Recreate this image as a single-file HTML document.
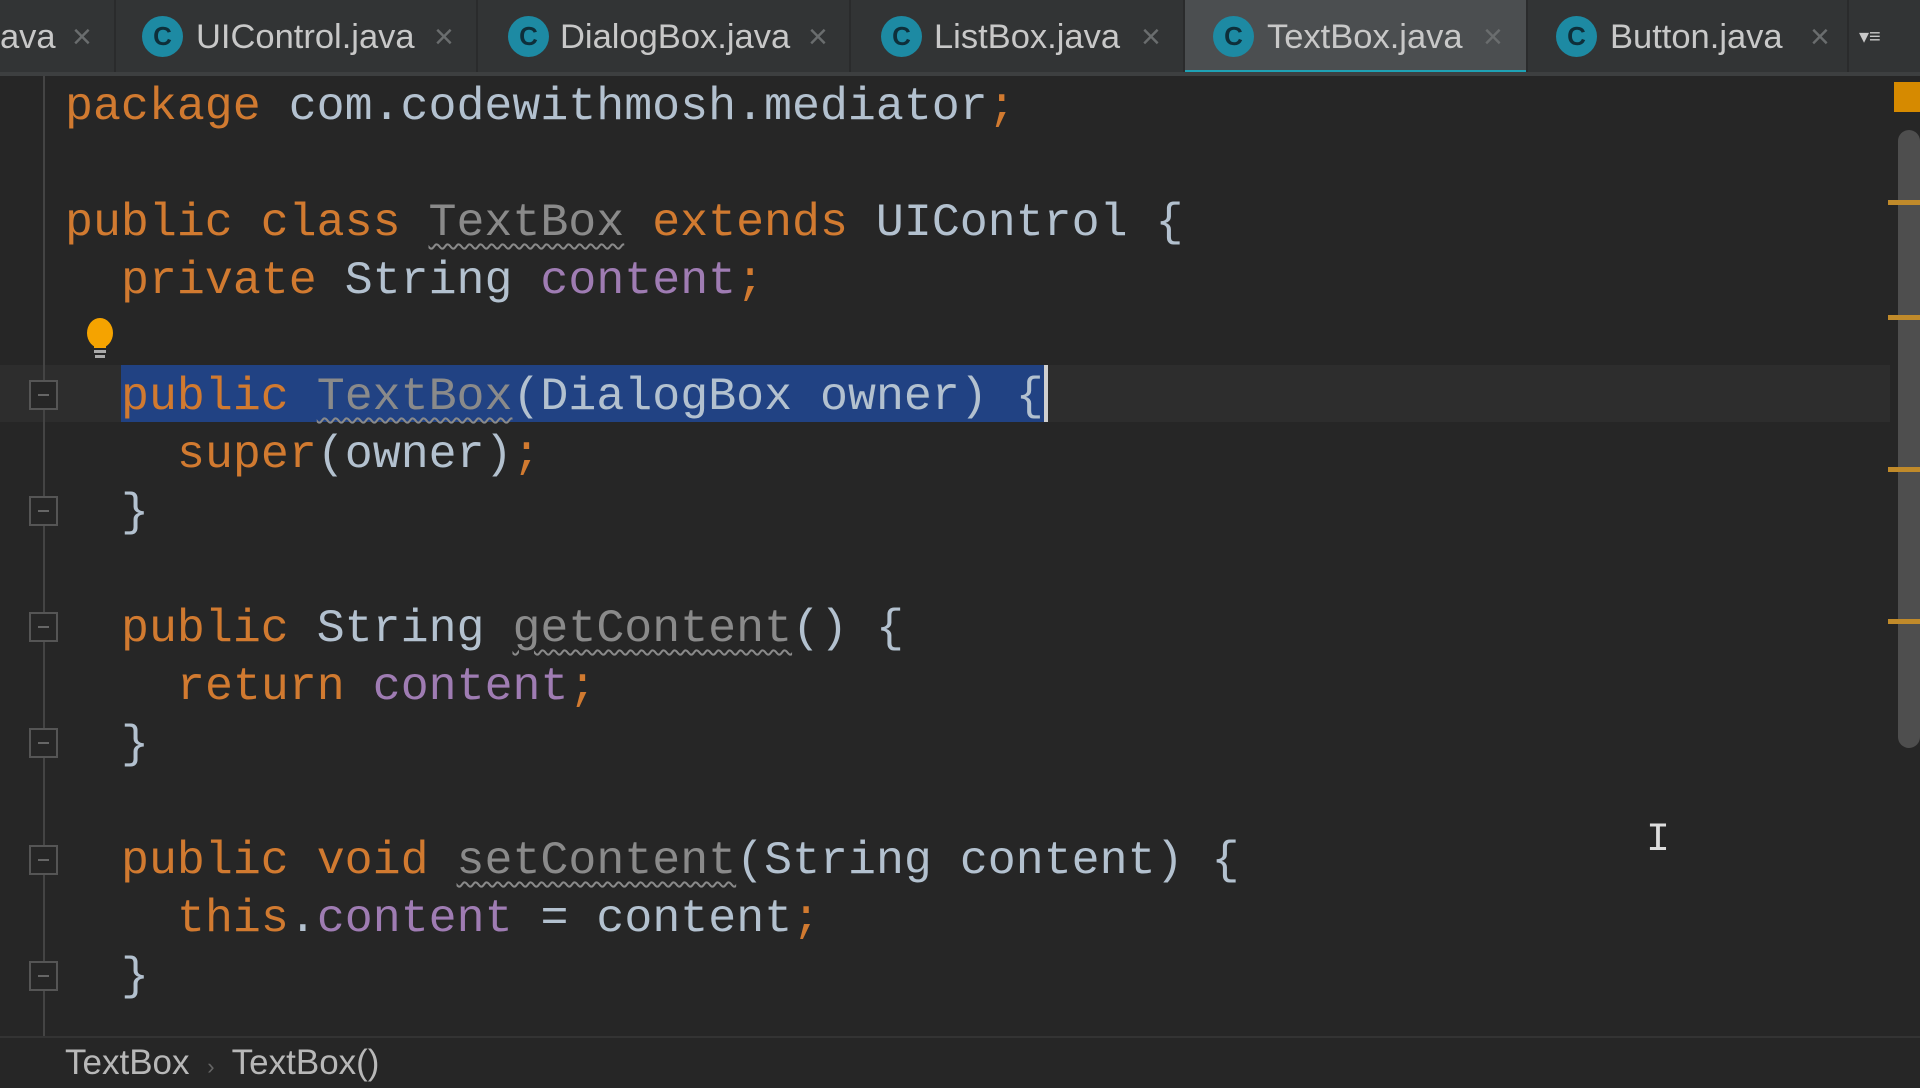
<!DOCTYPE html>
<html><head><meta charset="utf-8"><style>
*{margin:0;padding:0;box-sizing:border-box}
body{width:1920px;height:1080px;background:#262626;position:relative;overflow:hidden;font-family:"Liberation Sans",sans-serif}
.tabs{position:absolute;left:0;top:0;width:1920px;height:72px;background:#323435}
.tabbar-b{position:absolute;left:0;top:72px;width:1920px;height:4px;background:#3d3f40}
.tab{position:absolute;top:0;height:72px;color:#c8c8c8;font-size:34.5px;line-height:74px;border-right:2px solid #2a2b2c}
.tab.act{background:#4b4e50}
.tab.act:after{content:"";position:absolute;left:0;right:0;bottom:-4px;height:6px;background:#1ea2b5}
.ic{position:absolute;top:16px;width:41px;height:41px;border-radius:50%;background:#1d8aa3;color:#0e2f3a;font-size:26px;line-height:41px;text-align:center;font-weight:bold}
.x{position:absolute;top:0;color:#6a6d6e;font-size:34px}
.t{position:absolute;top:0}
.code{position:absolute;left:0;top:3px;font-family:"Liberation Mono",monospace;font-size:46.6px;color:#b3c1cf;white-space:pre}
.l{position:absolute;height:58px;line-height:58px}
.k{color:#d17a30}.p{color:#9f7cb3}.g{color:#8a8a8a;text-decoration:underline wavy #8a8a8a;text-decoration-thickness:2px;text-underline-offset:8px}
.fold{position:absolute;left:29px;width:29px;height:30px;border:2px solid #555;background:#262626}
.fold:after{content:"";position:absolute;left:7px;top:12px;width:11px;height:2px;background:#666}
</style></head><body>
<div class="tabs">
 <div class="tab" style="left:0;width:116px"><span class="t" style="left:0">ava</span><span class="x" style="left:72px">×</span></div>
 <div class="tab" style="left:116px;width:362px"><div class="ic" style="left:26px">C</div><span class="t" style="left:80px">UIControl.java</span><span class="x" style="left:318px">×</span></div>
 <div class="tab" style="left:478px;width:373px"><div class="ic" style="left:30px">C</div><span class="t" style="left:82px">DialogBox.java</span><span class="x" style="left:330px">×</span></div>
 <div class="tab" style="left:851px;width:334px"><div class="ic" style="left:30px">C</div><span class="t" style="left:83px">ListBox.java</span><span class="x" style="left:290px">×</span></div>
 <div class="tab act" style="left:1185px;width:343px"><div class="ic" style="left:28px">C</div><span class="t" style="left:82px">TextBox.java</span><span class="x" style="left:298px">×</span></div>
 <div class="tab" style="left:1528px;width:321px"><div class="ic" style="left:28px">C</div><span class="t" style="left:82px">Button.java</span><span class="x" style="left:282px">×</span></div>
 <div class="tab" style="left:1849px;width:71px;border:0"><span class="t" style="left:10px;font-size:20px">▾≡</span></div>
</div>
<div class="tabbar-b"></div>
<div style="position:absolute;left:0;top:365px;width:1890px;height:57px;background:#2d2d2d"></div>
<div style="position:absolute;left:121px;top:365px;width:927px;height:57px;background:#214283"></div>
<div style="position:absolute;left:1044px;top:365px;width:4px;height:57px;background:#d0d0d0"></div>
<div style="position:absolute;left:43px;top:76px;width:2px;height:960px;background:#444"></div>
<div class="fold" style="top:380px"></div><div class="fold" style="top:496px"></div>
<div class="fold" style="top:612px"></div><div class="fold" style="top:728px"></div>
<div class="fold" style="top:845px"></div><div class="fold" style="top:961px"></div>
<svg style="position:absolute;left:84px;top:318px" width="32" height="44"><ellipse cx="16" cy="15" rx="13" ry="15" fill="#f5a300"/><rect x="10" y="24" width="12" height="6" fill="#f5a300"/><rect x="10" y="32" width="12" height="3" fill="#aaa"/><rect x="11" y="37" width="10" height="3" fill="#aaa"/></svg>
<div class="code">
<div class="l" style="left:65px;top:75px"><span class="k">package</span> com.codewithmosh.mediator<span class="k">;</span></div>
<div class="l" style="left:65px;top:191px"><span class="k">public class</span> <span class="g">TextBox</span> <span class="k">extends</span> UIControl {</div>
<div class="l" style="left:121px;top:249px"><span class="k">private</span> String <span class="p">content</span><span class="k">;</span></div>
<div class="l" style="left:121px;top:365px"><span class="k">public</span> <span class="g">TextBox</span>(DialogBox owner) {</div>
<div class="l" style="left:177px;top:423px"><span class="k">super</span>(owner)<span class="k">;</span></div>
<div class="l" style="left:121px;top:481px">}</div>
<div class="l" style="left:121px;top:597px"><span class="k">public</span> String <span class="g">getContent</span>() {</div>
<div class="l" style="left:177px;top:655px"><span class="k">return</span> <span class="p">content</span><span class="k">;</span></div>
<div class="l" style="left:121px;top:713px">}</div>
<div class="l" style="left:121px;top:829px"><span class="k">public void</span> <span class="g">setContent</span>(String content) {</div>
<div class="l" style="left:177px;top:887px"><span class="k">this</span>.<span class="p">content</span> = content<span class="k">;</span></div>
<div class="l" style="left:121px;top:945px">}</div>
</div>
<div style="position:absolute;left:1894px;top:82px;width:26px;height:30px;background:#d68a00"></div>
<div style="position:absolute;left:1898px;top:130px;width:22px;height:618px;border-radius:11px;background:#4e4e4e"></div>
<div style="position:absolute;left:1888px;top:200px;width:32px;height:5px;background:#c08a2a"></div>
<div style="position:absolute;left:1888px;top:315px;width:32px;height:5px;background:#c08a2a"></div>
<div style="position:absolute;left:1888px;top:467px;width:32px;height:5px;background:#c08a2a"></div>
<div style="position:absolute;left:1888px;top:619px;width:32px;height:5px;background:#c08a2a"></div>
<div style="position:absolute;left:1646px;top:818px;color:#ddd;font-family:'Liberation Mono',monospace;font-size:40px">I</div>
<div style="position:absolute;left:0;top:1036px;width:1920px;height:44px;background:#262626;border-top:2px solid #333"></div>
<div style="position:absolute;left:65px;top:1042px;color:#b8b8b8;font-size:35px;line-height:42px">TextBox <span style="color:#666;font-size:22px;margin:0 8px">›</span> TextBox()</div>
</body></html>
